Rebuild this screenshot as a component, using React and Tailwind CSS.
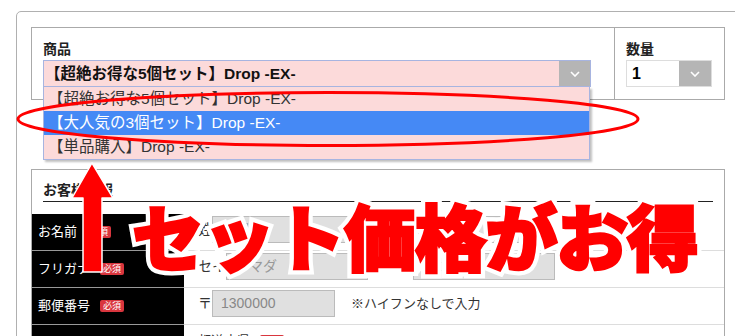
import React from "react";

const Chevron = () => (
  <svg width="10" height="6" viewBox="0 0 10 6" fill="none">
    <polyline points="1,1 5,5 9,1" stroke="white" strokeWidth="1.6" />
  </svg>
);

const Badge = () => (
  <span className="ml-[10px] inline-block bg-[#d9363e] text-white text-[9px] leading-[12px] px-[3px] rounded-[2px]">必須</span>
);

export default function App() {
  const font = { fontFamily: '"Liberation Sans", "Noto Sans CJK JP", sans-serif' };
  const bigFont = { fontFamily: '"Noto Sans CJK JP", sans-serif' };
  return (
    <div className="relative w-[735px] h-[336px] overflow-hidden bg-white text-[#333]" style={font}>
      <div className="ml-[16px] mt-[11px] w-[760px] h-[400px] border border-[#b0b0b0] rounded-tl-[5px] pt-[15px] pl-[14px]">
        {/* top table */}
        <div className="flex w-[694px] h-[73px] border border-[#aaa]">
          <div className="w-[583px] border-r border-[#aaa] pl-[11px] pt-[12px]">
            <div className="text-[14px] leading-[18px] font-bold text-[#222] mb-[2px]">商品</div>
            <div className="relative w-[548px] h-[27px]">
              <div className="flex h-[27px] border border-[#a7b4e0] bg-[#fcdada]">
                <div className="flex-1 flex items-center pl-[1px] text-[15.5px] font-bold text-[#111] whitespace-nowrap">【超絶お得な5個セット】Drop -EX-</div>
                <div className="w-[31px] bg-[#b5b5b5] flex items-center justify-center"><Chevron /></div>
              </div>
              <div className="absolute left-0 top-[27px] w-[547px] border border-[#a7b4e0] border-t-0 bg-[#fcdada] shadow-[2px_2px_2px_rgba(0,0,0,0.25)] text-[15.5px] whitespace-nowrap z-10">
                <div className="h-[24px] flex items-center pl-[4px] text-[#333]">【超絶お得な5個セット】Drop -EX-</div>
                <div className="h-[24px] flex items-center pl-[4px] bg-[#4589f5] text-white">【大人気の3個セット】Drop -EX-</div>
                <div className="h-[24px] flex items-center pl-[4px] text-[#333]">【単品購入】Drop -EX-</div>
              </div>
            </div>
          </div>
          <div className="flex-1 pl-[11px] pt-[12px]">
            <div className="text-[14px] leading-[18px] font-bold text-[#222] mb-[2px]">数量</div>
            <div className="flex w-[86px] h-[27px] border border-[#ddd]">
              <div className="flex-1 bg-white flex items-center pl-[5px] text-[16px] font-bold text-black">1</div>
              <div className="w-[32px] bg-[#b5b5b5] flex items-center justify-center"><Chevron /></div>
            </div>
          </div>
        </div>

        {/* customer info */}
        <div className="mt-[69px] w-[694px] h-[300px] border border-[#aaa]">
          <div className="mx-[11px] pt-[10px] border-b border-[#222]">
            <div className="text-[14px] leading-[20px] font-bold text-[#222] pb-[1px]">お客様情報</div>
          </div>
          <div className="mt-[12px] text-[13px]">
            <div className="flex h-[37px]">
              <div className="w-[152px] bg-black text-white border-b border-[#999] flex items-center pl-[6px]">お名前<Badge /></div>
              <div className="flex-1 border-b border-[#ddd] flex items-center pl-[14px] pb-[5px] text-[14px]">
                <span>姓</span>
                <div className="w-[142px] h-[27px] bg-[#e0e0e0] border border-[#bbb] flex items-center pl-[8px] text-[#999]">山田</div>
                <span className="ml-[15px]">名</span>
                <div className="ml-[2px] w-[142px] h-[27px] bg-[#e0e0e0] border border-[#bbb] flex items-center pl-[8px] text-[#999]">太郎</div>
              </div>
            </div>
            <div className="flex h-[37px]">
              <div className="w-[152px] bg-black text-white border-b border-[#999] flex items-center pl-[6px]">フリガナ<Badge /></div>
              <div className="flex-1 border-b border-[#ddd] flex items-center pl-[14px] pb-[5px] text-[14px]">
                <span>セイ</span>
                <div className="w-[142px] h-[27px] bg-[#e0e0e0] border border-[#bbb] flex items-center pl-[8px] text-[#999]">ヤマダ</div>
                <span className="ml-[15px]">メイ</span>
                <div className="ml-[2px] w-[142px] h-[27px] bg-[#e0e0e0] border border-[#bbb] flex items-center pl-[8px] text-[#999]">タロウ</div>
              </div>
            </div>
            <div className="flex h-[37px]">
              <div className="w-[152px] bg-black text-white border-b border-[#999] flex items-center pl-[6px]">郵便番号<Badge /></div>
              <div className="flex-1 border-b border-[#ddd] flex items-center pl-[14px] pb-[5px] text-[14px]">
                <span>〒</span>
                <div className="w-[123px] h-[27px] bg-[#e0e0e0] border border-[#bbb] flex items-center pl-[8px] text-[#888]">1300000</div>
                <span className="ml-[16px] text-[13px]">※ハイフンなしで入力</span>
              </div>
            </div>
            <div className="flex h-[37px]">
              <div className="w-[152px] bg-black text-white border-b border-[#999] flex items-center pl-[6px]">都道府県<Badge /></div>
              <div className="flex-1 border-b border-[#ddd] flex items-center pl-[14px] pb-[5px] text-[13px]">
                <span>都道府県</span><Badge />
              </div>
            </div>
          </div>
        </div>
      </div>

      {/* overlays */}
      <svg className="absolute left-0 top-0 pointer-events-none z-20" width="735" height="336">
        <ellipse cx="328" cy="119" rx="310" ry="26.5" fill="none" stroke="#ff0000" strokeWidth="3" />
        <polygon points="92,163 113,198 102,198 102,272 83,272 83,198 72,198" fill="#ff0000" stroke="white" strokeWidth="1.5" strokeLinejoin="round" />
      </svg>
      <div
        className="absolute left-[132px] top-[198px] z-30 text-[72px] leading-none font-black text-[#ff0000] whitespace-nowrap tracking-[-1.3px] [-webkit-text-stroke:11px_white] [paint-order:stroke_fill]"
        style={bigFont}
      >
        セット価格がお得
      </div>
      <div
        aria-hidden="true"
        className="absolute left-[132px] top-[198px] z-40 text-[72px] leading-none font-black text-[#ff0000] whitespace-nowrap tracking-[-1.3px] [-webkit-text-stroke:2.5px_#ff0000]"
        style={bigFont}
      >
        セット価格がお得
      </div>
    </div>
  );
}
